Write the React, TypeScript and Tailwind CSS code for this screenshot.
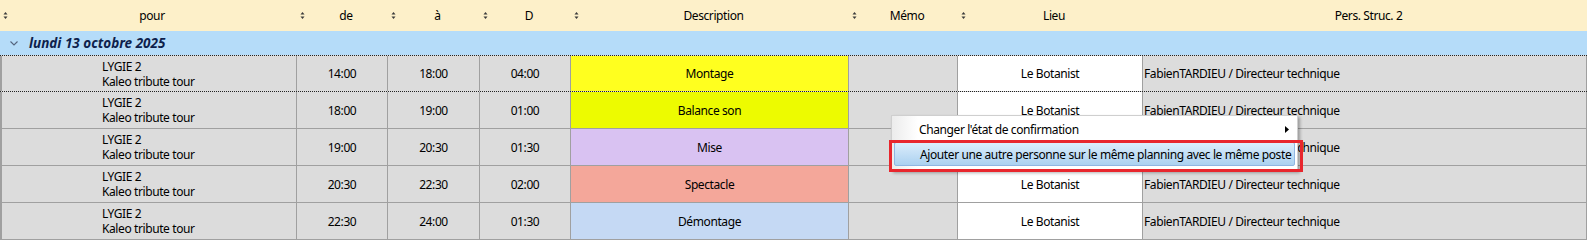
import React from 'react';

type Row = { de: string; a: string; d: string; desc: string; color: string };

const rows: Row[] = [
  { de: '14:00', a: '18:00', d: '04:00', desc: 'Montage', color: 'bg-[#ffff1f]' },
  { de: '18:00', a: '19:00', d: '01:00', desc: 'Balance son', color: 'bg-[#edfb00]' },
  { de: '19:00', a: '20:30', d: '01:30', desc: 'Mise', color: 'bg-[#d9c2f2]' },
  { de: '20:30', a: '22:30', d: '02:00', desc: 'Spectacle', color: 'bg-[#f4a79a]' },
  { de: '22:30', a: '24:00', d: '01:30', desc: 'Démontage', color: 'bg-[#c5d9f4]' },
];

const cols = 'grid grid-cols-[297px_91px_92px_91px_278px_109px_185px_444px]';

function SortIcon() {
  return (
    <svg width="5" height="9" viewBox="0 0 5 9" className="shrink-0">
      <path d="M2.5 1 L4.5 3.5 L0.5 3.5 Z" fill="#3a3a3a" />
      <path d="M0.5 5.5 L4.5 5.5 L2.5 8 Z" fill="#3a3a3a" />
    </svg>
  );
}

function HeadCell({ label, sort = true }: { label: string; sort?: boolean }) {
  return (
    <div className="flex items-center pl-[3px]">
      {sort ? <SortIcon /> : <span className="w-[5px]" />}
      <span className="flex-1 text-center pr-[1px]">{label}</span>
    </div>
  );
}

function ContextMenu() {
  return (
    <>
      <div className="absolute left-[891px] top-[115px] w-[407px] h-[56px] bg-white border border-[#cfcfcf] shadow-[2px_2px_3px_rgba(0,0,0,0.3)]">
        <div className="absolute left-0 top-0 bottom-0 w-[26px] bg-gradient-to-r from-[#ececec] to-white" />
        <div className="relative h-[26px] flex items-center pl-[27px] pr-[8px]">
          <span className="flex-1">Changer l'état de confirmation</span>
          <svg width="4" height="7" viewBox="0 0 4 7"><path d="M0 0 L4 3.5 L0 7 Z" fill="#000" /></svg>
        </div>
        <div className="relative mx-[2px] h-[24px] flex items-center pl-[25px] whitespace-nowrap rounded-[2px] border border-[#90b6e2] bg-gradient-to-b from-[#dcedfb] to-[#abd1f0]">
          Ajouter une autre personne sur le même planning avec le même poste
        </div>
      </div>
      <div className="absolute left-[889px] top-[140px] w-[414px] h-[32px] border-[3px] border-[#e8262d]" />
    </>
  );
}

export default function App() {
  return (
    <div className="relative w-[1587px] h-[240px] overflow-hidden bg-white text-[12px] leading-[15px] tracking-[-0.4px] text-black" style={{ fontFamily: '"Noto Sans", "Open Sans", sans-serif' }}>
      <div className={`${cols} h-[31px] bg-[#fdf0c9]`}>
        <HeadCell label="pour" />
        <HeadCell label="de" />
        <HeadCell label="à" />
        <HeadCell label="D" />
        <HeadCell label="Description" />
        <HeadCell label="Mémo" />
        <HeadCell label="Lieu" />
        <HeadCell label="Pers. Struc. 2" sort={false} />
      </div>

      <div className="h-[24px] bg-[#b5dcf9] flex items-center pl-[10px] gap-[11px]">
        <svg width="8" height="5" viewBox="0 0 8 5">
          <path d="M0.5 0.5 L4 4 L7.5 0.5" fill="none" stroke="#55647e" strokeWidth="1.1" />
        </svg>
        <span className="font-bold italic text-[13.5px] tracking-[0px] text-[#0e1f4c]">lundi 13 octobre 2025</span>
      </div>

      {rows.map((r, i) => (
        <div
          key={i}
          className={`${cols} h-[37px] bg-[#dcdcdc] ${i === 0 ? 'border-y border-dotted border-[#222]' : 'border-b border-[#a0a0a0]'}`}
        >
          <div className="border-l-2 border-r border-[#a0a0a0] pl-[100px] flex flex-col justify-center">
            <span>LYGIE 2</span>
            <span>Kaleo tribute tour</span>
          </div>
          <div className="border-r border-[#a0a0a0] flex items-center justify-center">{r.de}</div>
          <div className="border-r border-[#a0a0a0] flex items-center justify-center">{r.a}</div>
          <div className="border-r border-[#a0a0a0] flex items-center justify-center">{r.d}</div>
          <div className={`border-r border-[#a0a0a0] flex items-center justify-center ${r.color}`}>{r.desc}</div>
          <div className="border-r border-[#a0a0a0]" />
          <div className="border-r border-[#a0a0a0] bg-white flex items-center justify-center">Le Botanist</div>
          <div className="border-r border-[#a0a0a0] flex items-center pl-[1px]">FabienTARDIEU / Directeur technique</div>
        </div>
      ))}

      <ContextMenu />
    </div>
  );
}
